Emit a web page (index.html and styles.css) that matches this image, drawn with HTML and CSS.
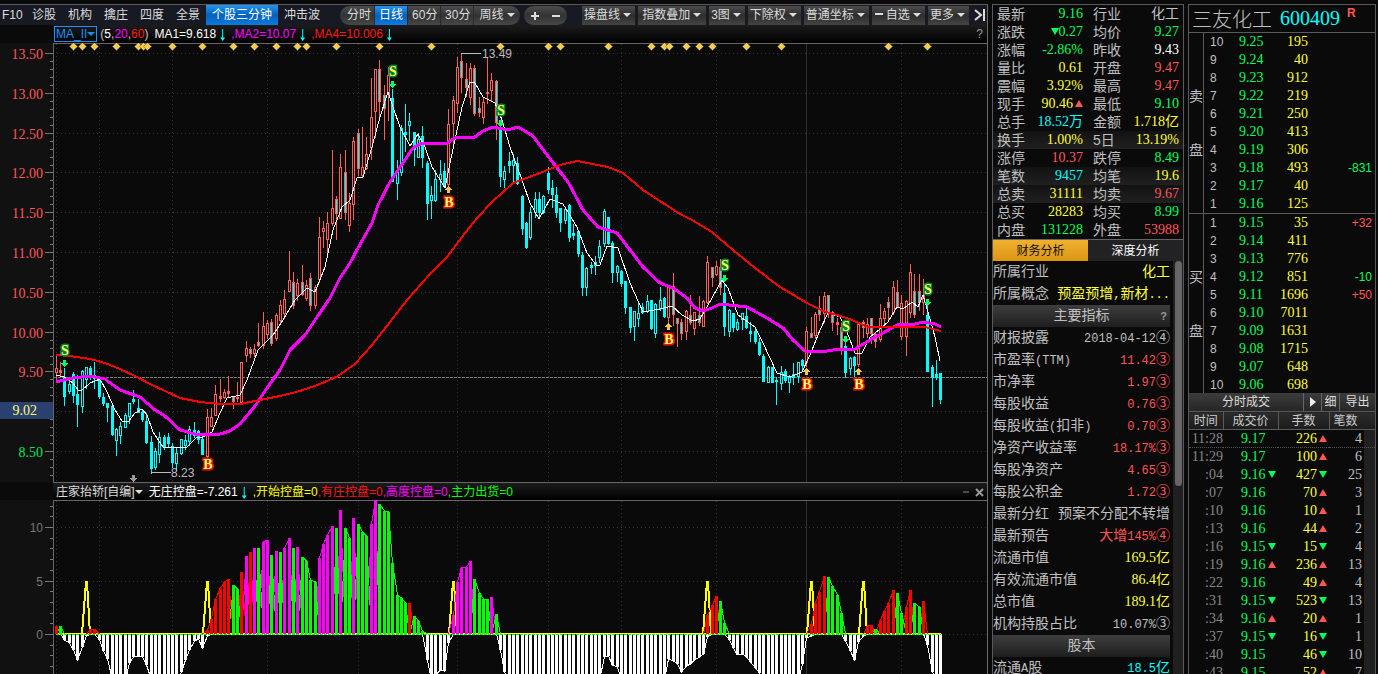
FILE: index.html
```html
<!DOCTYPE html>
<html lang="zh-CN">
<head>
<meta charset="utf-8">
<title>三友化工 600409</title>
<link rel="stylesheet" href="styles.css">
</head>
<body>
<div class="app">
  <main class="charts">
    <nav class="toolbar">
      <button class="tab tab-first">F10</button><button class="tab">诊股</button><button class="tab">机构</button><button class="tab">擒庄</button><button class="tab">四度</button><button class="tab">全景</button><button class="tab active">个股三分钟</button><button class="tab">冲击波</button>
      <div class="pill periods"><button>分时</button><button class="active">日线</button><button>60分</button><button>30分</button><button class="drop">周线</button></div>
      <div class="pill zoomer"><button aria-label="放大"><svg width="10" height="10"><path d="M5 1v8M1 5h8" stroke="#ddd" stroke-width="2"/></svg></button><button aria-label="缩小"><svg width="10" height="10"><path d="M1 5h8" stroke="#ddd" stroke-width="2"/></svg></button></div>
      <div class="menus"><button class="drop">操盘线</button><button class="drop">指数叠加</button><button class="drop">3图</button><button class="drop">下除权</button><button class="drop">普通坐标</button><button class="drop"><i class="dash"></i>自选</button><button class="drop">更多</button></div>
      <button class="collapse" aria-label="收起"><svg width="14" height="14"><path d="M2 2l6 5-6 5M11 1v12" fill="none" stroke="#ddd" stroke-width="2"/></svg></button>
    </nav>
    <div class="indicator main-ind">
      <button class="ma-name drop">MA_II</button>
      <span class="params">(<b class="white">5</b>,<b class="mag">20</b>,<b class="red">60</b>)</span>
      <span class="white">MA1=9.618</span><i class="down"></i><span class="mag comma">,MA2=10.07</span><i class="down"></i><span class="red comma">,MA4=10.006</span><i class="down"></i>
      <button class="help">?</button>
    </div>
    <svg class="k-chart" id="kline" role="img" aria-label="日K线"></svg>
    <div class="indicator sub-ind">
      <button class="sub-name drop">庄家抬轿[自编]</button>
      <span class="white">无庄控盘=-7.261</span><i class="down"></i><span class="yel comma">,开始控盘=0</span><span class="red">,有庄控盘=0</span><span class="mag">,高度控盘=0</span><span class="lime">,主力出货=0</span>
      <div class="win-btns"><button aria-label="最小化"><svg width="8" height="8"><path d="M1 4h6" stroke="#888"/></svg></button><button aria-label="关闭"><svg width="9" height="9"><path d="M1 1l7 7M8 1l-7 7" stroke="#999" stroke-width="2"/></svg></button></div>
    </div>
    <svg class="s-chart" id="sub" role="img" aria-label="庄家抬轿"></svg>
  </main>

  <section class="info">
    <table class="quote"><tbody id="quote"></tbody></table>
    <div class="info-tabs"><button class="active">财务分析</button><button>深度分析</button></div>
    <div class="finance"><dl id="finance"></dl><div class="scroll"><div class="thumb"></div></div></div>
  </section>

  <aside class="book">
    <h1>三友化工 <span>600409</span><sup>R</sup></h1>
    <div class="side"><div class="side-name"><span>卖</span><span>盘</span></div><table><tbody id="sells"></tbody></table></div>
    <div class="side"><div class="side-name"><span>买</span><span>盘</span></div><table><tbody id="buys"></tbody></table></div>
    <div class="deal-bar"><span>分时成交</span><button aria-label="播放"><i class="play"></i></button><button>细</button><button>导出</button></div>
    <div class="deals">
      <table><thead><tr><th>时间</th><th>成交价</th><th>手数</th><th>笔数</th></tr></thead><tbody id="deals"></tbody></table>
    </div>
  </aside>
</div>
<script src="app.js"></script>
</body>
</html>
```
FILE: styles.css
```css
* { box-sizing: border-box; }
html, body { height: 100%; }
body { margin: 0; background: #0a0a0a; color: #c0c0c0; overflow: hidden; font: 12px/18px "Liberation Sans", "Noto Sans CJK SC", sans-serif; }
button { font: inherit; color: inherit; background: none; border: 0; padding: 0; margin: 0; white-space: nowrap; }
table { border-collapse: collapse; width: 100%; table-layout: fixed; }
td, th { padding: 0; font-weight: normal; white-space: nowrap; }
i { font-style: normal; }

.app { display: grid; grid-template-columns: minmax(0, 1fr) 192px 188px; column-gap: 4px; height: 100vh; padding: 4px 2px 0 0; overflow: hidden; }
.charts { border-top: 1px solid #5a5a5a; border-right: 1px solid #6a6a6a; overflow: hidden; display: flex; flex-direction: column; }
.charts > * { flex-shrink: 0; }

.toolbar { display: flex; height: 20px; background: #171923; color: #ddd; align-items: stretch; line-height: 19px; }
.toolbar > * { flex-shrink: 0; }
.tab { padding: 0 6px; }
.tab-first { padding: 0 4px 0 2px; width: 26px; text-align: left; }
.toolbar .active { background: linear-gradient(#2196f3, #0661b8 50%, #0b7ae0); color: #fff; }
.pill { display: flex; margin: 1px 0 0; height: 19px; border-radius: 10px; overflow: hidden; background: linear-gradient(#4c4c4c, #333 50%, #474747); }
.periods { margin-left: 14px; }
.periods button { padding: 0 4px; border-right: 1px solid #2a2a2a; width: 33px; }
.periods button:first-child { width: 35px; padding-left: 7px; }
.periods button:last-child { width: 46px; border: 0; }
.zoomer { margin-left: 4px; padding: 0 6px; gap: 11px; }
.zoomer svg { display: block; }
.menus { display: flex; gap: 3px; margin: 1px 0 0 15px; }
.menus button { padding: 0 4px 0 2px; background: linear-gradient(#4c4c4c, #2e2e2e 50%, #444); }
.menus button:nth-child(2) { padding: 0 5px 0 4px; }
.drop::after { content: ""; display: inline-block; border: 4px solid transparent; border-top-color: currentColor; border-bottom: 0; margin-left: 3px; vertical-align: 2px; }
.dash { display: inline-block; width: 8px; height: 2px; background: #ddd; margin: 0 3px 0 1px; vertical-align: 4px; }
.collapse { margin-left: auto; display: flex; align-items: center; }

.indicator { display: flex; align-items: center; height: 18px; margin-left: 53px; padding-left: 1px; background: linear-gradient(#1c1c1c, #000); line-height: 17px; white-space: nowrap; }
.indicator b { font-weight: normal; }
.ma-name { border: 1px solid #1e90ff; color: #1e8cf0; padding: 0 1px; height: 16px; line-height: 14px; }
.ma-name::after { margin-left: 0; }
.params { margin: 0 6px 0 3px; }
.down { width: 5px; height: 12px; background: #00ffff; margin: 2px 7px 0 4px; clip-path: polygon(40% 0, 60% 0, 60% 70%, 100% 70%, 50% 100%, 0 70%, 40% 70%); }
.comma { margin-left: -1px; }
.help { margin-left: auto; padding-right: 4px; color: #999; }
.white { color: #fff; } .mag { color: #ff00ff; } .red { color: #ff1414; } .yel { color: #ffff00; } .lime { color: #00ff00; }
.k-chart { display: block; width: 100%; height: 439px; }
.sub-ind { border-top: 1px solid #666; height: 18px; padding: 1px 0 0 3px; }
.sub-name { color: #ddd; margin-right: 6px; }
.sub-name::after { margin-left: 0; }
.win-btns { margin-left: auto; display: flex; gap: 5px; padding-right: 3px; }
.win-btns button { line-height: 0; }
.s-chart { display: block; width: 100%; height: 174px; }
svg text { font-family: "Liberation Sans", sans-serif; font-size: 12px; }
svg .price { font-family: "Liberation Serif", serif; font-size: 14px; text-anchor: end; }
svg .axis { text-anchor: end; fill: #777; }
svg .sig { font: bold 14px "Liberation Serif", serif; text-anchor: middle; paint-order: stroke; stroke-width: 3px; fill: #ffff50; }
svg .sig.s { stroke: #00803c; }
svg .sig.b { stroke: #e01010; }

.info { border: 1px solid #5a5a5a; border-bottom: 0; display: flex; flex-direction: column; overflow: hidden; }
.quote td { height: 18px; font-size: 14px; line-height: 18px; }
.quote tr:nth-child(8), .quote tr:nth-child(10), .quote tr:nth-child(11) { background: linear-gradient(#121212, #202020); }
.quote td:nth-child(odd) { width: 32px; padding-left: 4px; }
.quote td:nth-child(3) { width: 46px; padding-left: 10px; }
.quote td:nth-child(even) { font-family: "Liberation Serif", "Noto Sans CJK SC", serif; text-align: right; }
.quote td:last-child { padding-right: 4px; width: 54px; }
.quote td:nth-child(2) { width: 58px; }
.g { color: #00ff5a; } .r { color: #ff5555; } .y { color: #ffff3c; } .c { color: #00ffff; } .w { color: #fff; } .n { color: #c0c0c0; }
.info-tabs { display: flex; border-top: 1px solid #666; height: 22px; flex-shrink: 0; line-height: 20px; }
.info-tabs button { flex: 1; background: #222224; color: #fff; }
.info-tabs .active { background: linear-gradient(#f0b030, #dc9614); color: #111; }
.finance { display: flex; flex: 1; min-height: 0; }
.finance dl { flex: 1; margin: 0 3px 0 0; font-size: 14px; line-height: 21px; min-width: 0; }
.finance dl > div { display: flex; justify-content: space-between; height: 22px; white-space: nowrap; }
.finance dd { margin: 0; }
.finance dd, .finance dt { display: block; }
.mono { font: 12px "Liberation Mono", monospace; }
.serif { font: 14px "Liberation Serif", serif; }
.finance dl > .head { justify-content: center; background: linear-gradient(#3e3e3e, #1e1e1e); position: relative; }
.head button { position: absolute; right: 3px; top: 1px; font-size: 11px; color: #999; font-weight: bold; }
.scroll { width: 10px; background: #202020; padding: 0 1px 0 2px; }
.thumb { height: 225px; background: #666; border-radius: 4px; }

.book { border: 1px solid #5a5a5a; border-bottom: 0; display: flex; flex-direction: column; overflow: hidden; }
.book > * { flex-shrink: 0; }
h1 { margin: 0; height: 28px; border-bottom: 1px solid #5a5a5a; padding-left: 3px; font: 20px/27px "Noto Sans CJK SC", sans-serif; font-weight: 300; white-space: nowrap; display: flex; }
h1 span { font-family: "Liberation Serif", serif; color: #00ffff; margin-left: 8px; }
h1 sup { font: bold 12px/16px "Liberation Sans", sans-serif; color: #ff5555; margin-left: 7px; }
.side { display: flex; height: 180px; }
.side + .side { border-top: 1px solid #5a5a5a; }
.side-name { width: 15px; border-right: 1px solid #5a5a5a; display: flex; flex-direction: column; justify-content: center; gap: 36px; font-size: 14px; }
.side td { height: 18px; line-height: 18px; font-size: 14px; font-family: "Liberation Serif", serif; }
.side td:nth-child(1) { font-family: "Liberation Sans", sans-serif; font-size: 12px; width: 35px; padding-left: 6px; }
.side td:nth-child(2) { width: 30px; }
.side td:nth-child(3) { width: 39px; text-align: right; }
.side td:nth-child(4) { text-align: right; padding-right: 3px; font-family: "Liberation Sans", sans-serif; font-size: 12px; }
.deal-bar { display: flex; height: 18px; color: #ddd; background: linear-gradient(#3c3c3c, #262626); }
.deal-bar span { flex: 1; text-align: center; }
.deal-bar button { border-left: 1px solid #666; width: 18px; }
.deal-bar button:last-child { width: 36px; }
.play { display: inline-block; border: 5px solid transparent; border-left: 6px solid #eee; border-right: 0; vertical-align: -1px; }
.deals th { height: 18px; line-height: 16px; color: #ccc; background: linear-gradient(#2c2c2c, #1c1c1c); border: 1px solid #5a5a5a; border-width: 1px 1px 1px 0; }
.deals th:nth-child(1) { width: 34px; } .deals th:nth-child(2) { width: 55px; } .deals th:nth-child(3) { width: 51px; }
.deals th:last-child { text-align: left; padding-left: 4px; border-right: 0; }
.deals td { height: 18px; line-height: 18px; font: 14px "Liberation Serif", serif; text-align: right; }
.deals td:first-child { color: #888; }
.deals td:nth-child(2) { text-align: left; padding-left: 18px; }
.deals td:nth-child(3) { padding-right: 2px; }
.deals td:last-child { padding-right: 13px; }
.deals tbody { background: linear-gradient(90deg, transparent 175px, #202020 175px); }
.deals tbody tr:first-child td { border-bottom: 1px dotted #555; }
.up, .dn { display: inline-block; border: 4px solid transparent; margin-left: 2px; vertical-align: 1px; }
.up { border-bottom: 7px solid #ff5555; border-top: 0; }
.dn { border-top: 7px solid #00ff5a; border-bottom: 0; }
```
FILE: app.js
```js
// x, high, body top, body bottom, low, kind (r: hollow red, f: filled red, c: solid cyan, h: hollow cyan)
const candles = `56 356 368 372 380 r|60 362 370 372 377 f|64 368 377 396 405 c|69 380 384 391 393 h|73 372 374 395 402 c|77 375 394 404 426 c|82 370 371 406 412 h|86 367 367 379 388 h|90 366 368 377 379 c|94 362 375 378 388 c|99 378 380 396 398 c|103 393 397 403 405 c|107 403 403 407 421 c|112 404 406 434 435 c|116 428 429 440 455 h|120 422 426 435 443 h|125 413 415 427 427 h|129 403 403 416 423 h|133 390 399 401 403 c|138 399 408 412 412 c|142 410 412 419 421 c|146 413 421 442 443 c|151 436 442 468 473 c|155 448 451 467 469 h|159 432 437 454 462 h|164 435 437 447 449 c|168 433 437 443 447 c|172 443 446 462 467 c|176 448 453 463 470 h|181 439 439 453 454 h|185 435 440 445 449 h|189 426 429 441 445 h|194 422 430 435 437 c|198 430 431 439 443 c|202 435 439 454 454 c|207 409 417 456 458 r|211 408 417 426 426 r|215 385 394 415 415 r|220 379 396 398 401 r|224 389 392 397 398 r|228 376 391 393 397 r|233 397 397 401 408 f|237 382 397 398 401 r|241 362 362 402 402 r|246 341 348 355 361 r|250 347 349 353 357 f|254 344 349 353 356 r|258 323 342 345 346 f|263 312 326 345 348 r|267 320 323 334 338 r|271 319 322 343 345 f|276 313 315 338 340 r|280 300 305 320 322 r|284 290 299 313 318 r|289 251 280 291 291 r|293 272 282 305 308 f|297 279 283 295 300 r|302 265 282 294 295 f|306 280 285 298 300 r|310 273 278 305 310 f|315 285 287 305 308 r|319 217 237 279 282 r|323 221 228 231 247 r|327 212 223 239 252 r|332 150 208 223 225 r|336 196 199 213 239 f|340 154 167 218 218 r|345 150 172 212 219 f|349 193 203 225 231 r|353 137 141 204 219 r|358 129 133 168 175 f|362 127 167 175 177 r|366 137 154 168 169 r|371 78 117 147 159 r|375 69 69 111 137 r|379 60 69 101 118 f|384 85 95 108 139 f|388 67 75 94 120 r|392 89 98 181 181 c|397 160 170 183 199 h|401 125 128 172 175 h|405 104 132 134 151 c|409 113 121 125 140 h|414 132 132 149 165 c|418 133 139 157 157 h|422 126 136 157 167 c|427 161 163 203 219 c|431 186 195 200 218 h|435 170 179 200 201 h|440 160 174 179 191 h|444 163 171 186 187 c|448 109 124 184 185 r|453 96 100 123 148 r|457 57 67 103 112 r|461 54 61 77 92 f|466 63 79 87 96 f|470 63 68 97 104 r|474 65 68 113 115 f|479 97 108 112 116 f|483 97 102 117 123 r|487 57 92 93 103 r|491 73 80 90 100 r|496 80 81 122 139 f|500 127 129 176 186 c|504 166 171 179 187 h|509 152 161 165 172 c|513 154 160 165 183 h|517 157 163 183 184 c|522 195 196 228 234 c|526 222 223 247 248 c|530 207 212 237 239 h|535 192 199 212 217 h|539 192 199 212 217 c|543 195 196 212 213 h|548 167 173 189 193 c|552 180 188 194 207 c|556 187 195 212 217 c|560 208 208 222 231 c|565 208 209 220 223 h|569 204 205 237 241 c|573 224 233 235 239 c|578 230 231 253 256 c|582 252 255 287 295 c|586 267 268 287 295 h|591 262 265 267 273 c|595 256 262 265 274 c|599 240 246 257 262 h|604 209 211 243 246 h|608 217 217 243 244 c|612 241 243 272 282 c|617 265 266 272 281 h|621 270 271 283 286 c|625 281 281 307 313 c|630 307 307 327 332 c|634 311 311 326 340 h|638 303 313 318 326 h|642 303 307 312 313 c|647 295 301 311 312 h|651 300 300 328 329 c|655 303 304 333 337 h|660 287 300 308 310 h|664 297 298 316 317 c|668 286 286 317 322 r|673 273 286 314 325 f|677 318 318 323 346 f|681 319 322 333 339 f|686 310 311 331 339 r|690 295 315 322 324 f|694 312 312 328 334 r|699 296 315 322 325 f|703 300 301 326 326 r|707 256 262 302 303 r|712 267 267 277 286 f|716 261 266 274 275 r|720 259 267 287 294 f|724 283 293 326 335 c|729 309 310 331 336 h|733 313 313 327 331 c|737 319 322 329 330 h|742 313 313 319 329 h|746 307 316 327 328 c|750 322 331 333 341 c|755 329 331 341 343 c|759 338 342 354 355 c|763 354 356 381 381 c|768 366 367 382 382 h|772 367 367 382 382 c|776 377 380 381 404 c|781 366 372 383 389 h|785 369 371 380 382 c|789 375 377 382 392 h|793 363 374 377 384 c|798 362 362 376 382 h|802 359 360 365 369 c|806 327 331 362 366 r|811 317 333 337 337 f|815 312 314 335 338 r|819 296 308 314 320 f|824 292 296 313 322 r|828 295 295 313 317 f|832 311 312 322 330 f|837 318 322 324 334 f|841 323 327 347 354 f|845 343 346 372 377 c|850 357 358 368 374 h|854 356 357 365 376 c|858 323 324 364 366 r|863 320 322 327 337 f|867 318 324 333 337 r|871 318 318 333 343 f|875 333 334 341 347 f|880 304 318 339 341 r|884 308 311 318 323 r|888 297 302 307 319 f|893 281 287 312 314 r|897 280 292 306 307 f|901 295 303 336 339 r|906 300 301 336 355 r|910 264 272 312 317 r|914 274 291 314 317 f|919 274 291 302 310 f|923 279 295 302 314 r|927 304 315 371 371 c|932 365 367 377 406 c|936 360 374 377 379 c|940 373 373 399 403 c`.split('|').map(row => row.split(' ').map((v, i) => i < 5 ? +v : v));

const ma5 = '56,375 64,377 73,383 78,390 82,390 90,383 100,379 107,392 115,410 122,421 128,422 135,413 142,409 147,415 153,432 163,447 177,448 187,447 197,437 203,437 212,432 220,413 227,398 240,395 247,380 258,350 273,335 283,320 295,300 307,288 315,292 325,267 333,230 342,207 350,200 357,178 363,177 372,147 380,117 388,92 393,107 400,127 410,146 418,134 425,147 432,167 445,188 450,163 462,107 470,82 475,83 483,97 495,103 502,120 510,147 522,180 530,203 539,219 550,199 563,204 577,227 587,253 597,266 600,265 607,246 618,248 630,283 643,312 660,309 672,306 682,315 693,321 700,319 707,307 722,280 728,288 738,315 755,327 763,343 777,373 790,377 802,372 810,355 820,330 828,313 840,317 847,332 855,353 862,353 870,337 880,329 888,322 897,307 903,309 912,302 918,307 923,295 928,312 935,337 940,361';
const ma20 = '56,382 64,380 73,378 90,376 105,379 113,385 120,390 140,397 155,410 165,416 180,430 195,434 205,435 220,434 230,431 240,424 255,406 265,391 280,370 290,350 305,335 315,320 330,298 340,278 350,263 358,248 372,223 378,205 390,182 400,167 413,148 422,143 447,143 455,138 475,137 483,131 493,127 508,130 518,127 533,136 547,155 568,182 583,210 598,227 617,233 630,250 643,267 660,283 673,288 687,298 695,308 703,311 712,308 720,304 747,307 767,318 783,328 793,340 805,351 820,352 840,349 855,349 870,340 883,333 897,325 915,324 923,322 935,324 941,327';
const ma60 = '56,355 70,356 90,359 105,363 120,369 135,376 150,384 165,391 180,398 200,402 220,404 240,404 260,400 280,396 300,391 320,384 338,376 355,364 372,345 390,322 407,300 430,274 447,257 462,237 477,218 492,202 513,183 540,173 560,165 577,161 608,167 623,173 643,190 663,203 680,214 692,220 712,232 733,250 755,268 780,287 807,303 823,311 847,318 868,327 890,327 925,327 941,331';

const gridX = [56, 99, 172, 267, 358, 457, 548, 621, 716, 901];
const line = (x1, y1, x2, y2, c, extra = '') => `<path d="M${x1} ${y1}L${x2} ${y2}" stroke="${c}" ${extra}/>`;
const dots = 'stroke-dasharray="1 3"';
const rect = (x, y, w, h, fill, extra = '') => `<rect x="${x}" y="${y}" width="${w}" height="${h}" fill="${fill}" ${extra}/>`;

function drawMain() {
  let s = rect(0, 43, 53, 439, '#111112');
  s += line(53, 43.5, 4000, 43.5, '#666') + line(53.5, 43, 53.5, 482, '#666');
  for (let i = 0; i <= 10; i++) {
    const y = Math.round(53 + i * 39.8) + .5;
    s += line(57, y, 4000, y, '#333', dots) + line(45, y, 53, y, '#777');
    for (let k = 1; k < 5; k++) if (y + k * 8 < 482) s += line(50, y + k * 8, 53, y + k * 8, '#777');
    const price = (13.5 - i * .5).toFixed(2);
    if (i !== 9) s += `<text class="price" x="43" y="${y + 5}" fill="${i < 9 ? '#ff5555' : '#00e65a'}">${price}</text>`;
  }
  gridX.forEach(x => s += line(x + .5, 44, x + .5, 482, '#333', dots));
  s += line(806.5, 44, 806.5, 482, '#303030') + line(54, 377.5, 4000, 377.5, '#777', 'stroke-dasharray="3 1"');
  s += rect(0, 402, 53, 17, '#2a4070') + '<text class="price" x="37" y="415" fill="#ffff66">9.02</text>';
  for (const [x, hi, top, bot, lo, kind] of candles) {
    const c = kind === 'r' || kind === 'f' ? '#ff5c5c' : '#00ffff';
    s += rect(x, hi, 1, lo - hi + 1, c);
    if (kind === 'c' || bot - top < 3) s += rect(x - 1, top, 3, bot - top + 1, c);
    else s += rect(x - 1, top, 3, bot - top + 1, c) + rect(x, top + 1, 1, bot - top - 1, kind === 'f' ? '#00ffff' : '#0a0a0a');
  }
  s += `<polyline points="${ma5}" stroke="#fff"/><polyline points="${ma20}" stroke="#ff00ff" stroke-width="3"/><polyline points="${ma60}" stroke="#ff0000" stroke-width="2"/>`;
  [73, 82, 94, 116, 138, 143, 147, 172, 202, 233, 254, 276, 297, 306, 336, 379, 431, 500, 548, 560, 608, 651, 664, 669, 686, 699, 712, 746, 781, 888, 927]
    .forEach(x => s += `<path d="M${x - 3.5} 46.5l4-4 4 4-4 4z" fill="#f0cc58" stroke="#6b5820" stroke-width=".5" shape-rendering="auto"/>`);
  [[64, 350], [392, 71], [500, 110], [724, 265], [845, 326], [927, 289]].forEach(([x, y]) => {
    s += `<text class="sig s" x="${x + 1}" y="${y + 5}">S</text><path d="M${x - 1} ${y + 10}h3v3h2l-3.500 4-3.500-4h2z" fill="#00ff64"/>`;
  });
  [[207, 464], [448, 202], [668, 339], [806, 384], [858, 384]].forEach(([x, y], i) => {
    s += `<text class="sig b" x="${x + 1}" y="${y + 5}">B</text>`;
    if (i) s += `<path d="M${x - 1} ${y - 9}h3v-3h2l-3.500-4-3.500 4h2z" fill="#f0c850"/>`;
  });
  s += line(461, 53.5, 481, 53.5, '#bbb') + '<text x="482" y="58" fill="#bbb">13.49</text>';
  s += line(151, 472.5, 171, 472.5, '#bbb') + '<text x="171" y="477" fill="#bbb">8.23</text>';
  s += '<path d="M132 475h3v3h2l-3.500 4-3.500-4h2z" fill="#999"/>';
  document.getElementById('kline').innerHTML = `<g transform="translate(0 -43)" fill="none" shape-rendering="crispEdges">${s}</g>`;
}

// x, bar top, series
const bars = `56 626 r|60 626 g|90 629 r|94 629 r|207 630 r|211 619 r|215 599 r|220 588 r|224 582 r|228 579 r|233 585 g|237 589 g|241 572 r|246 556 m|250 552 r|254 548 m|258 548 g|263 542 m|267 540 m|271 555 g|276 551 m|280 552 g|284 548 m|289 538 m|293 548 g|297 547 m|302 557 g|306 561 g|310 580 g|315 582 g|319 558 m|323 544 m|327 535 m|332 526 m|336 528 g|340 510 m|345 528 g|349 538 g|353 518 m|358 524 g|362 532 g|366 536 g|371 524 m|375 500 m|379 504 g|384 511 g|388 512 g|392 563 g|397 595 g|401 598 g|405 603 g|409 603 r|414 616 g|418 621 g|422 631 g|453 615 m|457 582 m|461 568 m|466 567 m|470 561 m|474 579 g|479 593 g|483 599 g|487 599 g|491 597 m|496 614 g|707 615 r|712 605 r|716 596 r|720 601 g|724 623 g|811 624 r|815 603 r|819 592 r|824 576 r|828 577 g|832 586 g|837 595 g|841 613 g|867 626 r|871 625 r|875 629 g|880 620 r|884 611 r|888 603 r|893 590 r|897 593 g|901 613 g|906 607 r|910 590 r|914 603 g|919 607 g|923 601 r`.split('|').map(r => r.split(' '));
const below = { 64: 640, 69: 643, 73: 650, 77: 660, 82: 647, 86: 636, 99: 640, 103: 651, 107: 659, 112: 674, 129: 663, 133: 657, 138: 656, 142: 657, 146: 665, 151: 680, 181: 672, 185: 660, 189: 650, 194: 641, 198: 639, 202: 648, 207: 636, 427: 660, 431: 680, 435: 675, 440: 670, 444: 671, 448: 643, 500: 650, 504: 672, 604: 657, 608: 656, 612: 665, 617: 667, 668: 659, 673: 661, 677: 664, 681: 672, 686: 666, 690: 664, 694: 660, 699: 657, 703: 654, 707: 637, 729: 640, 733: 648, 737: 655, 742: 654, 746: 657, 750: 662, 755: 668, 759: 673, 802: 664, 806: 638, 811: 636, 845: 641, 850: 651, 854: 660, 858: 642, 863: 636, 927: 645, 932: 672 };
const deep = [[112, 125], [151, 176], [431, 431], [508, 599], [621, 664], [763, 798], [936, 940]];

function drawSub() {
  let s = rect(0, 500, 53, 174, '#111112') + line(53, 500.5, 4000, 500.5, '#666') + line(53.5, 482, 53.5, 674, '#666');
  [527.5, 581.5, 634.5].forEach((y, i) => {
    s += line(57, y, 4000, y, '#333', dots) + line(45, y, 53, y, '#777') + `<text class="axis" x="43" y="${y + 4}">${10 - i * 5}</text>`;
  });
  for (let k = -2; k <= 13; k++) { const y = Math.round(527 + k * 10.7) + .5; s += line(50, y, 53, y, '#777'); }
  gridX.forEach(x => s += line(x + .5, 501, x + .5, 674, '#333', dots));
  s += line(806.5, 501, 806.5, 674, '#303030');
  const depth = x => deep.some(([a, b]) => x >= a && x <= b) ? 680 : below[x] || 634;
  s += `<polyline points="${candles.map(([x]) => `${x + .5},${depth(x)}`).join(' ')}" stroke="#fff"/>`;
  candles.forEach(([x]) => { const d = depth(x); if (d > 634) s += rect(x - 1, 634, 3, d - 634, '#fff'); });
  s += line(56, 633.5, 941, 633.5, '#ffff00') + line(56, 634.5, 941, 634.5, '#00ff00', 'stroke-dasharray="3 1"');
  [86, 207, 453, 707, 811, 863].forEach(x => s += `<polyline points="${x - 4},634 ${x},582 ${x + 1},582 ${x + 4},634" stroke="#ffff00" stroke-width="2"/>`);
  const hue = { r: '#ff0000', m: '#ff00ff', g: '#00ff00' };
  for (const key of 'rmg') {
    const tops = Object.fromEntries(bars.filter(b => b[2] === key).map(b => [b[0], +b[1]]));
    const pts = candles.map(([x]) => [x, tops[x] || 634]);
    for (let i = 1; i < pts.length; i++) {
      if (pts[i][1] < 634 || pts[i - 1][1] < 634) s += line(pts[i - 1][0] + .5, pts[i - 1][1], pts[i][0] + .5, pts[i][1], hue[key]);
    }
  }
  bars.forEach(([x, y, k]) => s += rect(x - 1, y, 3, 634 - y, hue[k]));
  document.getElementById('sub').innerHTML = `<g transform="translate(0 -500)" fill="none" shape-rendering="crispEdges">${s}</g>`;
}

const arrow = t => t.replace('▲', '<i class="up"></i>').replace('▼', '<i class="dn"></i>');
const quote = `最新 9.16 g 行业 化工 n|涨跌 ▼0.27 g 均价 9.27 g|涨幅 -2.86% g 昨收 9.43 w|量比 0.61 y 开盘 9.47 r|震幅 3.92% y 最高 9.47 r|现手 90.46▲ y 最低 9.10 g|总手 18.52万 c 金额 1.718亿 y|换手 1.00% y 5日 13.19% y|涨停 10.37 r 跌停 8.49 g|笔数 9457 c 均笔 19.6 y|总卖 31111 y 均卖 9.67 r|总买 28283 y 均买 8.99 g|内盘 131228 g 外盘 53988 r`;
document.getElementById('quote').innerHTML = quote.split('|').map(r => {
  const [a, b, c, d, e, f] = r.split(' ');
  return `<tr><td>${a}</td><td class="${c}">${arrow(b)}</td><td>${d}</td><td class="${f}">${e}</td></tr>`;
}).join('');

const finance = `所属行业 化工 y|所属概念 预盈预增,新材... y|主要指标|财报披露 2018-04-12④ n|市盈率(TTM) 11.42③ r|市净率 1.97③ r|每股收益 0.76③ r|每股收益(扣非) 0.70③ r|净资产收益率 18.17%③ r|每股净资产 4.65③ r|每股公积金 1.72③ r|最新分红 预案不分配不转增 n|最新预告 大增145%④ r|流通市值 169.5亿 y|有效流通市值 86.4亿 y|总市值 189.1亿 y|机构持股占比 10.07%③ n|股本|流通A股 18.5亿 c`;
document.getElementById('finance').innerHTML = finance.split('|').map(r => {
  const [a, b, c] = r.split(' ');
  const wrap = t => t.replace(/[\x20-\x7e]+/g, m => `<span class="${/^(169|86|189)/.test(m) ? 'serif' : 'mono'}">${m}</span>`);
  return b ? `<div><dt>${wrap(a)}</dt><dd class="${c}">${wrap(b)}</dd></div>` : `<div class="head"><dt>${a}</dt>${a === '股本' ? '' : '<button>?</button>'}</div>`;
}).join('');

const book = (id, rows) => document.getElementById(id).innerHTML = rows.split('|').map(r => {
  const [n, p, v, d = ''] = r.split(' ');
  return `<tr><td>${n}</td><td class="g">${p}</td><td class="y">${v}</td><td class="${d[0] === '+' ? 'r' : 'g'}">${d}</td></tr>`;
}).join('');
book('sells', '10 9.25 195|9 9.24 40|8 9.23 912|7 9.22 219|6 9.21 250|5 9.20 413|4 9.19 306|3 9.18 493 -831|2 9.17 40|1 9.16 125');
book('buys', '1 9.15 35 +32|2 9.14 411|3 9.13 776|4 9.12 851 -10|5 9.11 1696 +50|6 9.10 7011|7 9.09 1631|8 9.08 1715|9 9.07 648|10 9.06 698');

document.getElementById('deals').innerHTML = '11:28 9.17 226▲ 4|11:29 9.17 100▲ 6|:04 9.16▼ 427▼ 25|:07 9.16 70▲ 3|:10 9.16 10▲ 1|:13 9.16 44▲ 2|:16 9.15▼ 15▼ 4|:19 9.16▲ 236▲ 13|:22 9.16 49▲ 4|:31 9.15▼ 523▼ 13|:34 9.16▲ 20▲ 1|:37 9.15▼ 16▼ 1|:40 9.15 46▼ 10|:43 9.15 52▲ 7'
  .split('|').map(r => { const [t, p, v, n] = r.split(' '); return `<tr><td>${t}</td><td class="g">${arrow(p)}</td><td class="y">${arrow(v)}</td><td>${n}</td></tr>`; }).join('');

drawMain();
drawSub();
```
